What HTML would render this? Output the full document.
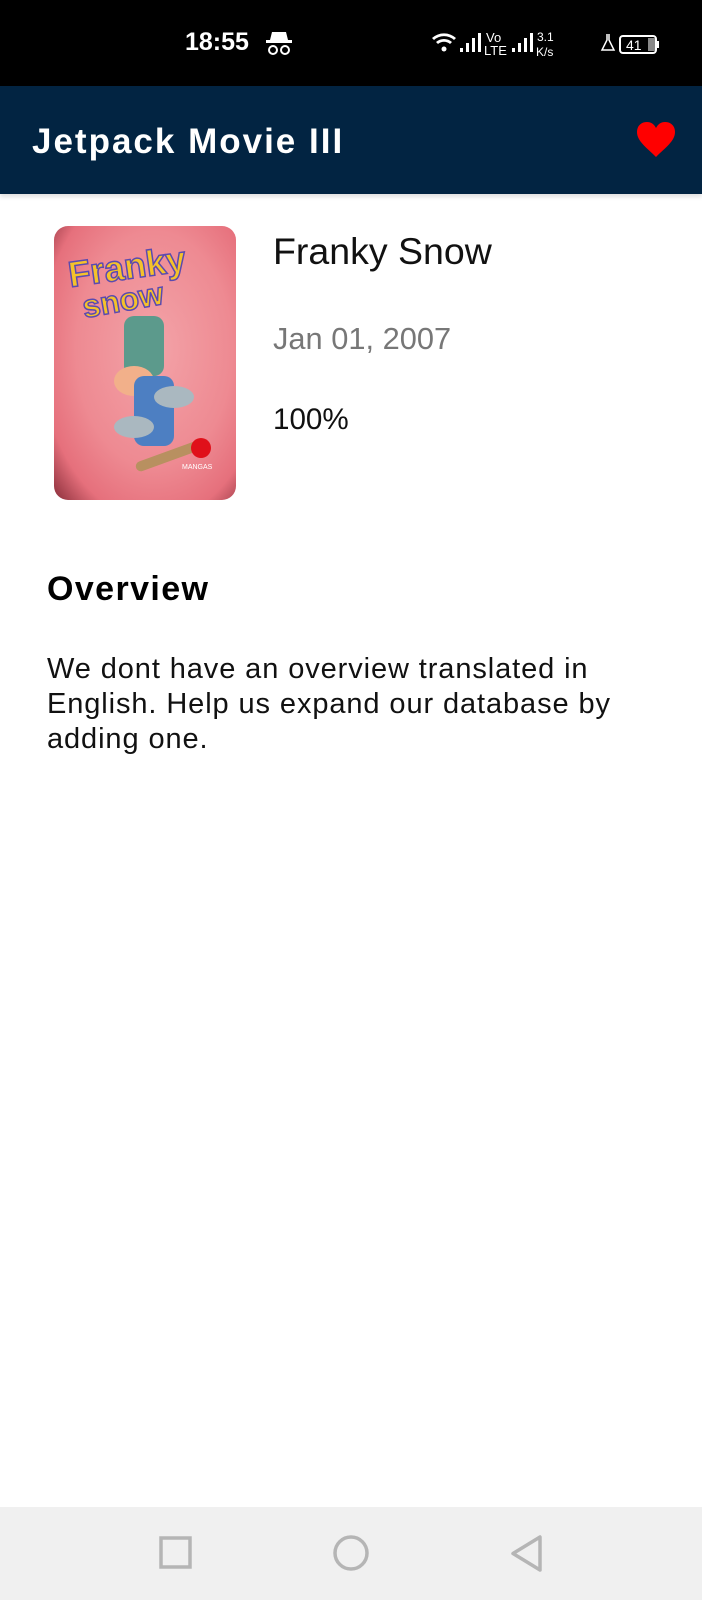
<!DOCTYPE html>
<html><head><meta charset="utf-8"><style>
*{margin:0;padding:0;box-sizing:border-box}
body{width:702px;height:1600px;position:relative;background:#fff;font-family:"Liberation Sans",Roboto,sans-serif;overflow:hidden}
.sb{position:absolute;left:0;top:0;width:702px;height:86px;background:#000;color:#fff}
.hd{position:absolute;left:0;top:86px;width:702px;height:108px;background:#022442;box-shadow:0 3px 4px rgba(0,0,0,.12)}
.t{position:absolute;color:#fff;font-size:35px;font-weight:bold;left:32px;top:36px;letter-spacing:2px}
.poster{position:absolute;left:54px;top:226px;width:182px;height:274px;border-radius:14px;overflow:hidden;
background:radial-gradient(ellipse at 55% 45%,#f3a3a8 0%,#ee8a92 55%,#e6707c 80%,#8a2e3a 100%)}
.txt{position:absolute;white-space:nowrap}
.nav{position:absolute;left:0;top:1507px;width:702px;height:93px;background:#f0f0f0}
</style></head><body>
<div class="sb">
<div class="txt" style="left:185px;top:28px;font-size:25px;font-weight:bold;">18:55</div>
<svg style="position:absolute;left:264px;top:30px" width="30" height="26" viewBox="0 0 30 26"><path d="M8 2h14l2 8H6z" fill="#fff"/><rect x="2" y="10" width="26" height="3" fill="#fff"/><circle cx="9" cy="20" r="4" fill="none" stroke="#fff" stroke-width="2"/><circle cx="21" cy="20" r="4" fill="none" stroke="#fff" stroke-width="2"/></svg>
<svg style="position:absolute;left:430px;top:28px" width="240" height="34" viewBox="0 0 240 34">
<g fill="#fff"><path d="M2 10a18 18 0 0 1 24 0l-2 2a15 15 0 0 0-20 0z"/><path d="M6 14a12 12 0 0 1 16 0l-2 2a9 9 0 0 0-12 0z"/><circle cx="14" cy="21" r="2.5"/>
<rect x="30" y="20" width="3" height="4"/><rect x="36" y="15" width="3" height="9"/><rect x="42" y="10" width="3" height="14"/><rect x="48" y="5" width="3" height="19"/>
<text x="56" y="14" font-size="13" font-family="Liberation Sans">Vo</text><text x="54" y="27" font-size="13" font-family="Liberation Sans">LTE</text>
<rect x="82" y="20" width="3" height="4"/><rect x="88" y="15" width="3" height="9"/><rect x="94" y="10" width="3" height="14"/><rect x="100" y="5" width="3" height="19"/>
<text x="107" y="13" font-size="12" font-family="Liberation Sans">3.1</text><text x="106" y="28" font-size="12" font-family="Liberation Sans">K/s</text></g>
<path d="M177 6v6l-5 10h12l-5-10V6" fill="none" stroke="#fff" stroke-width="1.5"/>
<rect x="190" y="8" width="36" height="17" rx="3" fill="none" stroke="#fff" stroke-width="2"/><rect x="226" y="13" width="3" height="7" fill="#fff"/><rect x="218" y="10" width="7" height="13" fill="#888"/>
<text x="196" y="22" font-size="14" fill="#fff" font-family="Liberation Sans">41</text></svg>
</div>
<div class="hd"><div class="t">Jetpack Movie III</div>
<svg style="position:absolute;left:636px;top:36px" width="40" height="36" viewBox="0 0 40 36"><path d="M20 35C10 25 1 19 1 10 1 4 5 0 11 0c4 0 7 2 9 6 2-4 5-6 9-6 6 0 10 4 10 10 0 9-9 15-19 25z" fill="#f00"/></svg></div>
<div class="poster">
<div style="position:absolute;left:14px;top:20px;font:bold 36px 'Liberation Sans';color:#f5c22a;transform:rotate(-8deg);-webkit-text-stroke:1.5px #5a4ab0">Franky</div>
<div style="position:absolute;left:28px;top:56px;font:bold 32px 'Liberation Sans';color:#f5c22a;transform:rotate(-10deg);-webkit-text-stroke:1.5px #5a4ab0">snow</div>
<div style="position:absolute;left:70px;top:90px;width:40px;height:60px;background:#5c9a8c;border-radius:10px"></div>
<div style="position:absolute;left:60px;top:140px;width:40px;height:30px;background:#f2b08a;border-radius:50%"></div>
<div style="position:absolute;left:80px;top:150px;width:40px;height:70px;background:#4d7fc2;border-radius:10px"></div>
<div style="position:absolute;left:60px;top:190px;width:40px;height:22px;background:#aab8c0;border-radius:50%"></div>
<div style="position:absolute;left:100px;top:160px;width:40px;height:22px;background:#aab8c0;border-radius:50%"></div>
<div style="position:absolute;left:80px;top:225px;width:70px;height:10px;background:#b89060;border-radius:5px;transform:rotate(-20deg)"></div>
<div style="position:absolute;left:137px;top:212px;width:20px;height:20px;background:#e0101a;border-radius:50%"></div>
<div style="position:absolute;left:128px;top:238px;font:7px 'Liberation Sans';color:#fff">MANGAS</div>
</div>
<div class="txt" style="left:273px;top:230px;font-size:37.5px;color:#111">Franky Snow</div>
<div class="txt" style="left:273px;top:321px;font-size:30.8px;color:#777">Jan 01, 2007</div>
<div class="txt" style="left:273px;top:403px;font-size:29.6px;color:#111">100%</div>
<div class="txt" style="left:47px;top:570px;font-size:34px;font-weight:bold;color:#000;letter-spacing:1.4px">Overview</div>
<div style="position:absolute;left:47px;top:652px;width:660px;font-size:29px;letter-spacing:0.9px;line-height:35px;color:#111;white-space:nowrap">We dont have an overview translated in<br>English. Help us expand our database by<br>adding one.</div>
<div class="nav">
<svg width="702" height="93"><g fill="none" stroke="#b5b5b5" stroke-width="3.5"><rect x="161" y="31" width="29" height="29"/><circle cx="351" cy="46" r="16"/><path d="M540 30v33l-27-16.5z" stroke-linejoin="round"/></g></svg>
</div>
</body></html>
